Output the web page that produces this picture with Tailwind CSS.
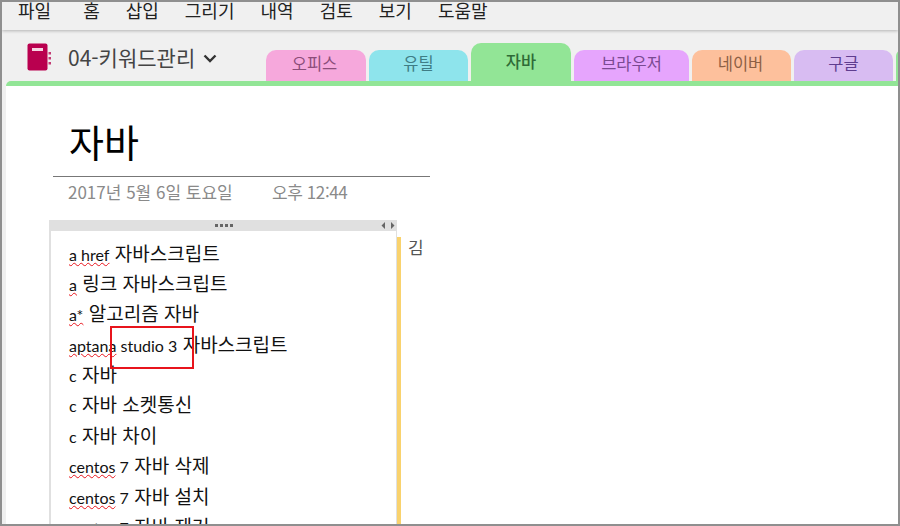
<!DOCTYPE html>
<html lang="ko">
<head>
  <meta charset="UTF-8" />
  <title>자바</title>
  <script src="https://cdn.jsdelivr.net/npm/@tailwindcss/browser@4"></script>
</head>
<body class="bg-white font-['Lato','Noto_Sans_CJK_KR',sans-serif]">
  <div class="relative flex h-[526px] w-[900px] flex-col overflow-hidden border-2 border-[#8f8f8f] bg-[#f0f0f0]">

    <!-- Menu -->
    <div class="flex h-[28px] shrink-0 items-start gap-[26px] pl-[16px] text-[18px] leading-[17px] text-[#222] shadow-[0_1px_3px_rgba(0,0,0,0.25)] font-['Noto_Sans_CJK_KR',sans-serif]">
      <span class="mr-[6px]">파일</span>
      <span>홈</span>
      <span>삽입</span>
      <span>그리기</span>
      <span>내역</span>
      <span>검토</span>
      <span>보기</span>
      <span>도움말</span>
    </div>

    <!-- Notebook + section tabs -->
    <div class="flex h-[51px] shrink-0 items-end">
      <div class="flex h-full w-[264px] shrink-0 items-start pl-[25px] pt-[13px]">
        <svg width="25" height="28" viewBox="0 0 25 28" class="shrink-0">
          <rect x="0.5" y="0.5" width="20" height="27" rx="2" fill="#b9004f" />
          <rect x="5" y="5" width="11" height="3" fill="#f5d5e2" />
          <rect x="21.5" y="9" width="2.5" height="2.5" fill="#c33a74" />
          <rect x="21.5" y="14" width="2.5" height="2.5" fill="#c33a74" />
          <rect x="21.5" y="19" width="2.5" height="2.5" fill="#c33a74" />
        </svg>
        <span class="ml-[16px] whitespace-nowrap text-[21px] leading-[28px] text-[#444] font-['Noto_Sans_CJK_KR',sans-serif]">04-키워드관리</span>
        <svg width="14" height="9" viewBox="0 0 14 9" class="ml-[8px] mt-[11px] shrink-0">
          <path d="M1.5 1.5 L7 7 L12.5 1.5" fill="none" stroke="#333" stroke-width="2.4" />
        </svg>
      </div>
      <div class="flex items-end gap-[3px] text-center text-[16.5px] font-['Noto_Sans_CJK_KR',sans-serif]">
        <div class="h-[31px] w-[100px] rounded-t-[10px] bg-[#f6a8dc] pr-[3px] leading-[26px] text-[#8b4d79]">오피스</div>
        <div class="h-[31px] w-[99px] rounded-t-[10px] bg-[#8ee4ec] leading-[26px] text-[#3f7d85]">유틸</div>
        <div class="h-[38px] w-[100px] rounded-t-[10px] bg-[#92e596] leading-[36px] font-medium text-[#2f6b37]">자바</div>
        <div class="h-[31px] w-[115px] rounded-t-[10px] bg-[#e6a5fd] leading-[26px] text-[#7a4a92]">브라우저</div>
        <div class="h-[31px] w-[99px] rounded-t-[10px] bg-[#fdc09c] pr-[2px] leading-[26px] text-[#8c5f44]">네이버</div>
        <div class="h-[31px] w-[99px] rounded-t-[10px] bg-[#d8bcf2] leading-[26px] text-[#5f3d8f]">구글</div>
        <div class="h-[31px] w-[8px] rounded-tl-[6px] bg-[#92e596]"></div>
      </div>
    </div>

    <!-- Page -->
    <div class="ml-[4px] flex min-h-0 flex-1 flex-col">
      <div class="h-[5px] shrink-0 rounded-tl-[5px] bg-[#92e596]"></div>
      <div class="flex min-h-0 flex-1 flex-col overflow-hidden bg-white pl-[47px]">

        <div class="w-[377px] shrink-0 border-b border-[#777] pb-[7px] pl-[16px] pt-[26px] text-[38px] leading-[57px] text-black font-['Noto_Sans_CJK_KR',sans-serif]">자바</div>
        <div class="flex h-[30px] shrink-0 items-center pl-[15px] text-[17px] text-[#8a8a8a] font-['Noto_Sans_CJK_KR',sans-serif]">
          <span class="w-[204px] whitespace-nowrap">2017년 5월 6일 토요일</span>
          <span class="whitespace-nowrap tracking-[-0.4px]">오후 12:44</span>
        </div>

        <div class="-ml-[4px] mt-[13px] flex min-h-0 flex-1 items-start">
          <!-- Outline box -->
          <div class="flex h-full w-[348px] shrink-0 flex-col border-l-2 border-r border-[#e0e0e0]">
            <div class="relative flex h-[11px] shrink-0 items-center justify-center gap-[2px] bg-[#e0e0e0]">
              <i class="h-[3px] w-[3px] bg-[#666]"></i><i class="h-[3px] w-[3px] bg-[#666]"></i><i class="h-[3px] w-[3px] bg-[#666]"></i><i class="h-[3px] w-[3px] bg-[#666]"></i>
              <svg width="14" height="7" viewBox="0 0 14 7" class="absolute right-[1px] top-[2px]">
                <path d="M4 0 V7 L0.5 3.5 Z M10 0 V7 L13.5 3.5 Z" fill="#666" />
              </svg>
            </div>
            <div class="flex flex-col pl-[18px] pt-[6.5px] text-[19px] leading-[30px] text-[#111] font-['Noto_Sans_CJK_KR',sans-serif]">
              <p class="h-[30.4px] whitespace-nowrap"><span class="font-['Lato'] text-[16px] underline decoration-wavy decoration-[#e8141c] decoration-1">a href</span> 자바스크립트</p>
              <p class="h-[30.4px] whitespace-nowrap"><span class="font-['Lato'] text-[16px] underline decoration-wavy decoration-[#e8141c] decoration-1">a</span> 링크 자바스크립트</p>
              <p class="h-[30.4px] whitespace-nowrap"><span class="font-['Lato'] text-[16px] underline decoration-wavy decoration-[#e8141c] decoration-1">a*</span> 알고리즘 자바</p>
              <p class="h-[30.4px] whitespace-nowrap"><span class="font-['Lato'] text-[16px] underline decoration-wavy decoration-[#e8141c] decoration-1">aptana</span><span class="font-['Lato'] text-[16px]"> studio 3</span> 자바스크립트</p>
              <p class="h-[30.4px] whitespace-nowrap"><span class="font-['Lato'] text-[16px]">c</span> 자바</p>
              <p class="h-[30.4px] whitespace-nowrap"><span class="font-['Lato'] text-[16px]">c</span> 자바 소켓통신</p>
              <p class="h-[30.4px] whitespace-nowrap"><span class="font-['Lato'] text-[16px]">c</span> 자바 차이</p>
              <p class="h-[30.4px] whitespace-nowrap"><span class="font-['Lato'] text-[16px] underline decoration-wavy decoration-[#e8141c] decoration-1">centos</span><span class="font-['Lato'] text-[16px]"> 7</span> 자바 삭제</p>
              <p class="h-[30.4px] whitespace-nowrap"><span class="font-['Lato'] text-[16px] underline decoration-wavy decoration-[#e8141c] decoration-1">centos</span><span class="font-['Lato'] text-[16px]"> 7</span> 자바 설치</p>
              <p class="h-[30.4px] whitespace-nowrap"><span class="font-['Lato'] text-[16px] underline decoration-wavy decoration-[#e8141c] decoration-1">centos</span><span class="font-['Lato'] text-[16px]"> 7</span> 자바 제거</p>
            </div>
          </div>
          <!-- Next column -->
          <div class="mt-[17px] h-full w-[4px] shrink-0 bg-[#f9d26d]"></div>
          <div class="ml-[7px] mt-[15px] text-[17px] leading-[24px] text-[#555] font-['Noto_Sans_CJK_KR',sans-serif]">김</div>
        </div>
      </div>
    </div>

    <!-- Red annotation box -->
    <div class="absolute left-[108px] top-[324px] h-[43px] w-[84px] border-2 border-[#e8141c]"></div>
  </div>
</body>
</html>
